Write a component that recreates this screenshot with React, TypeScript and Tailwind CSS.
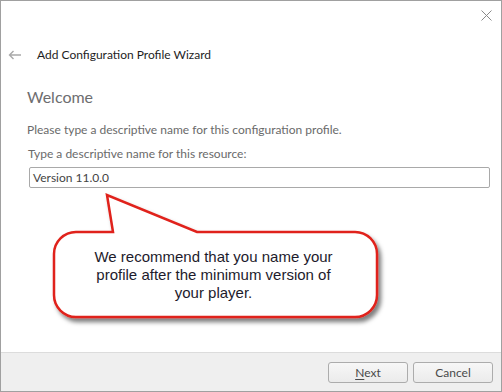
import React from "react";

const FONT = "font-['Lato','Open_Sans',sans-serif]";

function CloseIcon() {
  return (
    <svg width="11" height="11" viewBox="0 0 11 11" className="block">
      <path d="M0.5 0.5 L10.5 10.5 M10.5 0.5 L0.5 10.5" stroke="#8a8a8a" strokeWidth="1" fill="none" />
    </svg>
  );
}

function BackArrow() {
  return (
    <svg width="14" height="10" viewBox="0 0 14 10" className="block">
      <path d="M13 5 H1.5 M5.5 1 L1.5 5 L5.5 9" stroke="#a9a9a9" strokeWidth="1.4" fill="none" />
    </svg>
  );
}

function Callout() {
  return (
    <div className="absolute -left-px -top-px w-[502px] h-[392px] pointer-events-none">
      <svg width="502" height="392" viewBox="0 0 502 392" className="block">
        <defs>
          <filter id="shadow" x="-10%" y="-10%" width="130%" height="140%">
            <feDropShadow dx="3" dy="4" stdDeviation="2.2" floodColor="#000" floodOpacity="0.5" />
          </filter>
        </defs>
        <path
          d="M113 232 L107 195 L197 232 L355 232 A22 22 0 0 1 377 254 L377 295 A22 22 0 0 1 355 317 L76 317 A22 22 0 0 1 54 295 L54 254 A22 22 0 0 1 76 232 Z"
          fill="#fff"
          stroke="#e0211a"
          strokeWidth="2.5"
          strokeLinejoin="miter"
          filter="url(#shadow)"
        />
      </svg>
      <div className="absolute left-[52px] top-[248px] w-[323px] text-center text-[15px] leading-[18px] text-[#1d1b2c] font-['Liberation_Sans','Arial',sans-serif]">
        We recommend that you name your
        <br />
        profile after the minimum version of
        <br />
        your player.
      </div>
    </div>
  );
}

function Button({ children }: { children: React.ReactNode }) {
  return (
    <button className="w-[80px] h-[21px] rounded-[3px] border border-[#acacac] bg-gradient-to-b from-[#f7f7f7] to-[#ebebeb] text-[12px] leading-none text-[#4a4a4a] flex items-center justify-center">
      {children}
    </button>
  );
}

export default function App() {
  return (
    <div className={`relative w-[502px] h-[392px] border border-[#a0a0a0] bg-white flex flex-col overflow-hidden ${FONT}`}>
      {/* title bar */}
      <div className="h-[29px] flex justify-end items-start pt-[9px] pr-[9px]">
        <CloseIcon />
      </div>

      {/* wizard header */}
      <div className="mt-[13px] h-[24px] flex items-center pl-[7px]">
        <BackArrow />
        <span className="ml-[15px] text-[12px] text-[#1e1e1e]">Add Configuration Profile Wizard</span>
      </div>

      {/* body */}
      <div className="pl-[26px] pr-[11px] pt-[20px]">
        <h1 className="text-[16px] leading-[20px] text-[#6d6d6f]">Welcome</h1>
        <p className="mt-[15px] text-[12px] leading-[16px] text-[#6a6a6a]">
          Please type a descriptive name for this configuration profile.
        </p>
        <p className="mt-[8px] pl-[1px] text-[12px] leading-[16px] text-[#6a6a6a]">
          Type a descriptive name for this resource:
        </p>
        <div className="mt-[5px] ml-[2px] h-[21px] rounded-[2px] border border-[#a9a9a9] flex items-center px-[3px] text-[12px] text-[#444]">
          Version 11.0.0
        </div>
      </div>

      <div className="flex-1" />

      {/* footer */}
      <div className="h-[39px] border-t border-[#dcdcdc] bg-[#efefef] flex justify-end items-start pt-[9px] pr-[8px] gap-[5px]">
        <Button>
          <span className="underline underline-offset-2">N</span>ext
        </Button>
        <Button>Cancel</Button>
      </div>

      <Callout />
    </div>
  );
}
